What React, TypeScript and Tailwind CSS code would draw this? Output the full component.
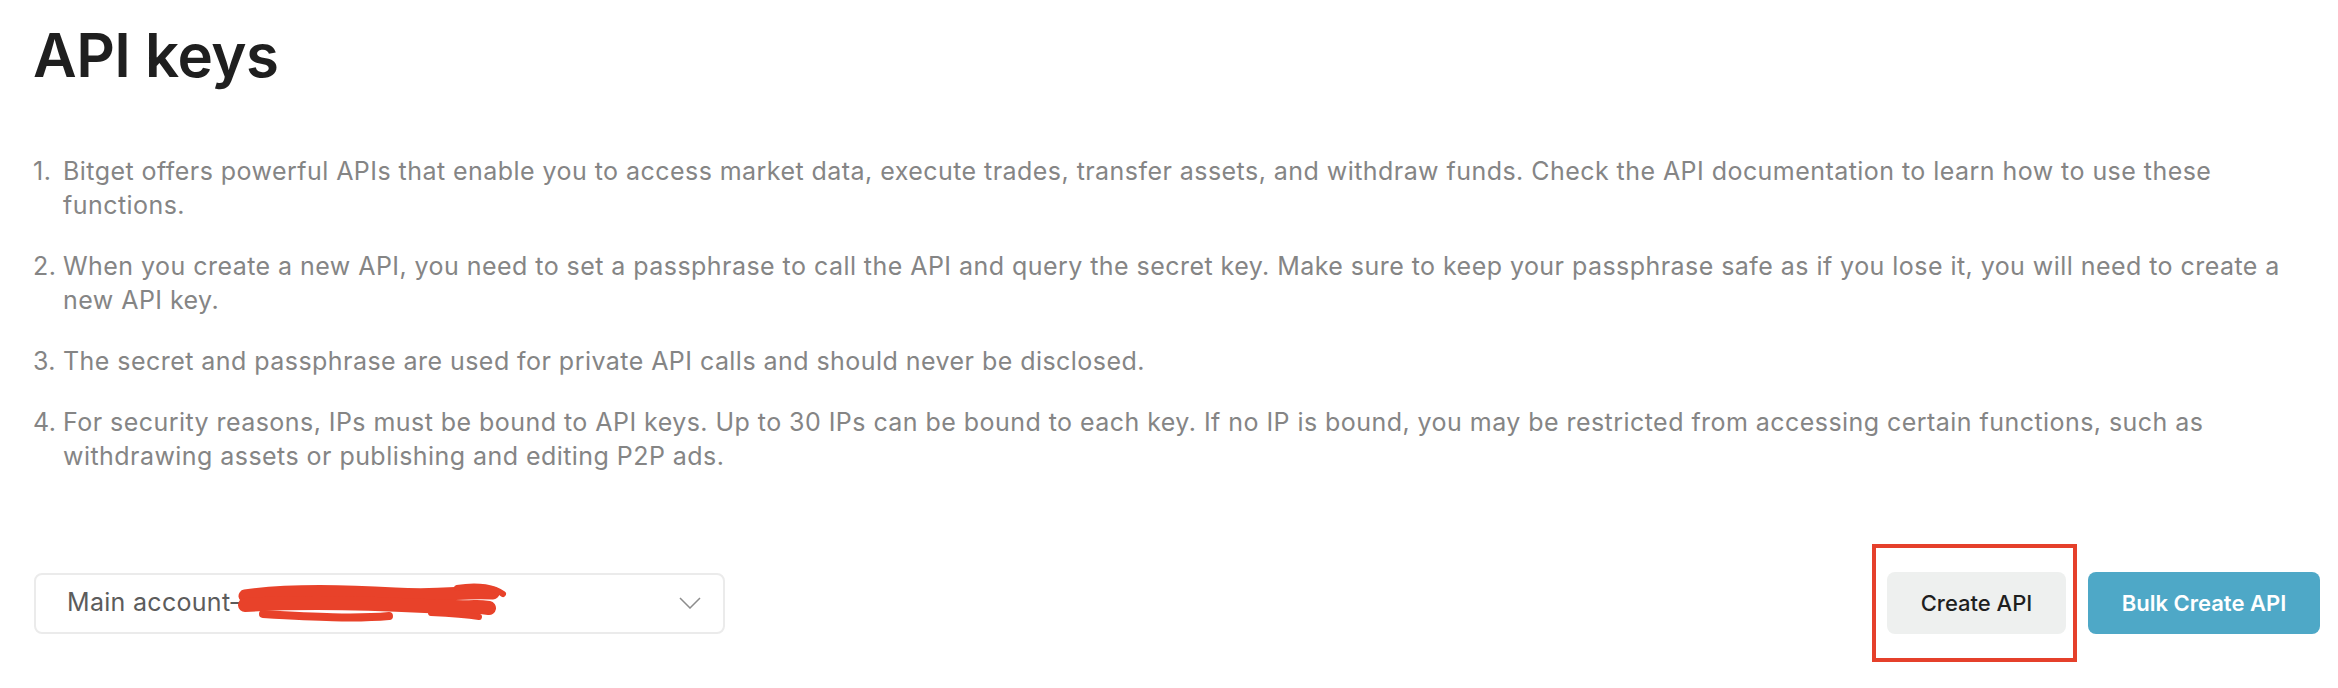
import React from 'react'

const notes = [
  'Bitget offers powerful APIs that enable you to access market data, execute trades, transfer assets, and withdraw funds. Check the API documentation to learn how to use these functions.',
  'When you create a new API, you need to set a passphrase to call the API and query the secret key. Make sure to keep your passphrase safe as if you lose it, you will need to create a new API key.',
  'The secret and passphrase are used for private API calls and should never be disclosed.',
  'For security reasons, IPs must be bound to API keys. Up to 30 IPs can be bound to each key. If no IP is bound, you may be restricted from accessing certain functions, such as withdrawing assets or publishing and editing P2P ads.',
]

function Scribble() {
  return (
    <svg width="272" height="46" viewBox="0 0 272 46" className="inline-block -ml-[8px]" fill="none">
      <g stroke="#e8422a" strokeLinecap="round" strokeLinejoin="round">
        <path d="M10 16 C 50 10, 110 11, 160 14 S 226 11, 258 13" strokeWidth="13" />
        <path d="M10 25 C 60 22, 130 23, 190 26 S 236 25, 254 28" strokeWidth="14" />
        <path d="M28 34 C 80 37, 120 39, 154 36" strokeWidth="8" />
        <path d="M196 33 C 215 34, 230 35, 244 37" strokeWidth="6" />
        <path d="M222 8 C 244 4, 260 8, 268 14" strokeWidth="6" />
      </g>
    </svg>
  )
}

export default function App() {
  return (
    <div className="min-h-[688px] bg-white pt-[25px] font-['Inter',sans-serif]">
      <h1 className="pl-[33px] text-[60px] leading-[60px] font-semibold tracking-[-0.5px] text-[#1f1f1f]">
        API keys
      </h1>

      {/* Notes */}
      <ol className="mt-[69px] pl-[33px] pr-[24px] text-[25px] leading-[34px] tracking-[0.45px] text-[#858585]">
        {notes.map((n, i) => (
          <li key={i} className="flex mb-[27px]">
            <span className="w-[30px] flex-shrink-0">{i + 1}.</span>
            <span>{n}</span>
          </li>
        ))}
      </ol>

      <div className="mt-[99px] flex items-center justify-between pl-[34px] pr-[18px]">
        <div className="w-[691px] h-[61px] flex items-center justify-between border-2 border-[#ebebeb] rounded-[8px] pl-[31px] pr-[22px]">
          <span className="flex items-center text-[25px] tracking-[0.3px] text-[#5c5c5c] whitespace-nowrap">
            Main account–
            <Scribble />
          </span>
          <svg width="22" height="12" viewBox="0 0 22 12" fill="none">
            <polyline points="1,1 11,11 21,1" stroke="#8c8c8c" strokeWidth="1.5" />
          </svg>
        </div>

        <div className="flex items-center gap-[22px]">
          <div className="relative">
            <button className="w-[179px] h-[62px] rounded-[8px] bg-[#eef0ef] text-[22px] font-medium text-[#1f1f1f]">
              Create API
            </button>
            {/* highlight frame */}
            <div className="absolute -left-[15px] -right-[11px] -top-[28px] -bottom-[28px] border-4 border-[#e5402b] pointer-events-none" />
          </div>
          <button className="w-[232px] h-[62px] rounded-[8px] bg-[#4ea8c7] text-[22px] font-semibold text-white">
            Bulk Create API
          </button>
        </div>
      </div>
    </div>
  )
}
